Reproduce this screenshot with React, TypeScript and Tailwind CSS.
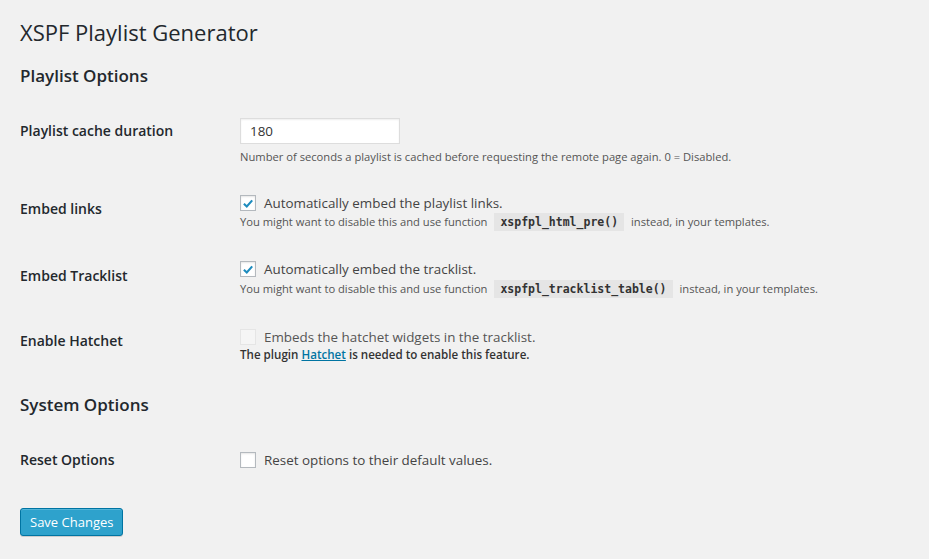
import type { ReactNode } from 'react';

function Check({ checked, disabled }: { checked?: boolean; disabled?: boolean }) {
	return (
		<span
			className={
				'inline-flex h-4 w-4 shrink-0 items-center justify-center border shadow-[inset_0_1px_2px_rgba(0,0,0,0.1)] ' +
				(disabled ? 'border-[#e5e5e5] bg-[#f5f5f5] shadow-none' : 'border-[#b4b9be] bg-white')
			}>
			{checked && (
				<svg viewBox="0 0 16 16" className="h-[15px] w-[15px]">
					<path d="M3.3 8.2 6.6 11.4 12.8 4.4" fill="none" stroke="#1e8cbe" strokeWidth="2.4" />
				</svg>
			)}
		</span>
	);
}

function Row({ label, thTop, tdTop, children }: { label: string; thTop: number; tdTop: number; children: ReactNode }) {
	return (
		<div className="flex">
			<div className="w-[220px] shrink-0 text-[14px] font-semibold leading-[18px] text-[#23282d]" style={{ paddingTop: thTop }}>
				{label}
			</div>
			<div style={{ paddingTop: tdTop }}>{children}</div>
		</div>
	);
}

function Code({ children }: { children: ReactNode }) {
	return (
		<code className="mx-[4px] bg-[#e5e5e5] px-[6px] py-[2px] font-['DejaVu_Sans_Mono',monospace] text-[11.5px] font-bold text-[#333]">
			{children}
		</code>
	);
}

export default function App() {
	return (
		<div className="min-h-[559px] bg-[#f1f1f1] px-5 pt-[18px] font-['Open_Sans',sans-serif] text-[#444]">
			<h1 className="text-[22px] font-normal leading-[29px] text-[#23282d]">XSPF Playlist Generator</h1>
			<h2 className="mt-[17px] text-[17px] font-semibold leading-[24px] text-[#23282d]">Playlist Options</h2>

			<Row label="Playlist cache duration" thTop={34} tdTop={30}>
				<input
					readOnly
					value="180"
					className="block h-[26px] w-[160px] border border-[#ddd] bg-white px-[9px] text-[13.4px] text-[#333] shadow-[inset_0_1px_2px_rgba(0,0,0,0.07)] outline-none"
				/>
				<p className="mt-[5px] text-[11.2px] leading-[16px] text-[#555]">
					Number of seconds a playlist is cached before requesting the remote page again. 0 = Disabled.
				</p>
			</Row>

			<Row label="Embed links" thTop={35} tdTop={29}>
				<label className="flex items-center gap-2 text-[13.4px] leading-[18px]">
					<Check checked />
					Automatically embed the playlist links.
				</label>
				<p className="mt-[1px] text-[11.2px] leading-[18px] text-[#555]">
					You might want to disable this and use function <Code>xspfpl_html_pre()</Code> instead, in your templates.
				</p>
			</Row>

			<Row label="Embed Tracklist" thTop={36} tdTop={29}>
				<label className="flex items-center gap-2 text-[13.4px] leading-[18px]">
					<Check checked />
					Automatically embed the tracklist.
				</label>
				<p className="mt-[2px] text-[11.2px] leading-[18px] text-[#555]">
					You might want to disable this and use function <Code>xspfpl_tracklist_table()</Code> instead, in your templates.
				</p>
			</Row>

			<Row label="Enable Hatchet" thTop={34} tdTop={30}>
				<label className="flex items-center gap-2 text-[13.4px] leading-[18px] text-[#555]">
					<Check disabled />
					Embeds the hatchet widgets in the tracklist.
				</label>
				<p className="mt-[0px] text-[11.6px] font-semibold leading-[18px] text-[#333]">
					The plugin{' '}
					<a href="#" className="text-[#0074a2] underline">
						Hatchet
					</a>{' '}
					is needed to enable this feature.
				</p>
			</Row>

			<h2 className="mt-[29px] text-[17px] font-semibold leading-[24px] text-[#23282d]">System Options</h2>

			<Row label="Reset Options" thTop={34} tdTop={34}>
				<label className="flex items-center gap-2 text-[13.4px] leading-[18px]">
					<Check />
					Reset options to their default values.
				</label>
			</Row>

			<button className="mt-[39px] h-[28px] rounded-[3px] border border-[#0074a2] bg-[#2ea2cc] px-[9px] text-[13px] leading-[26px] text-white shadow-[inset_0_1px_0_rgba(120,200,230,0.5),0_1px_0_rgba(0,0,0,0.15)]">
				Save Changes
			</button>
		</div>
	);
}
